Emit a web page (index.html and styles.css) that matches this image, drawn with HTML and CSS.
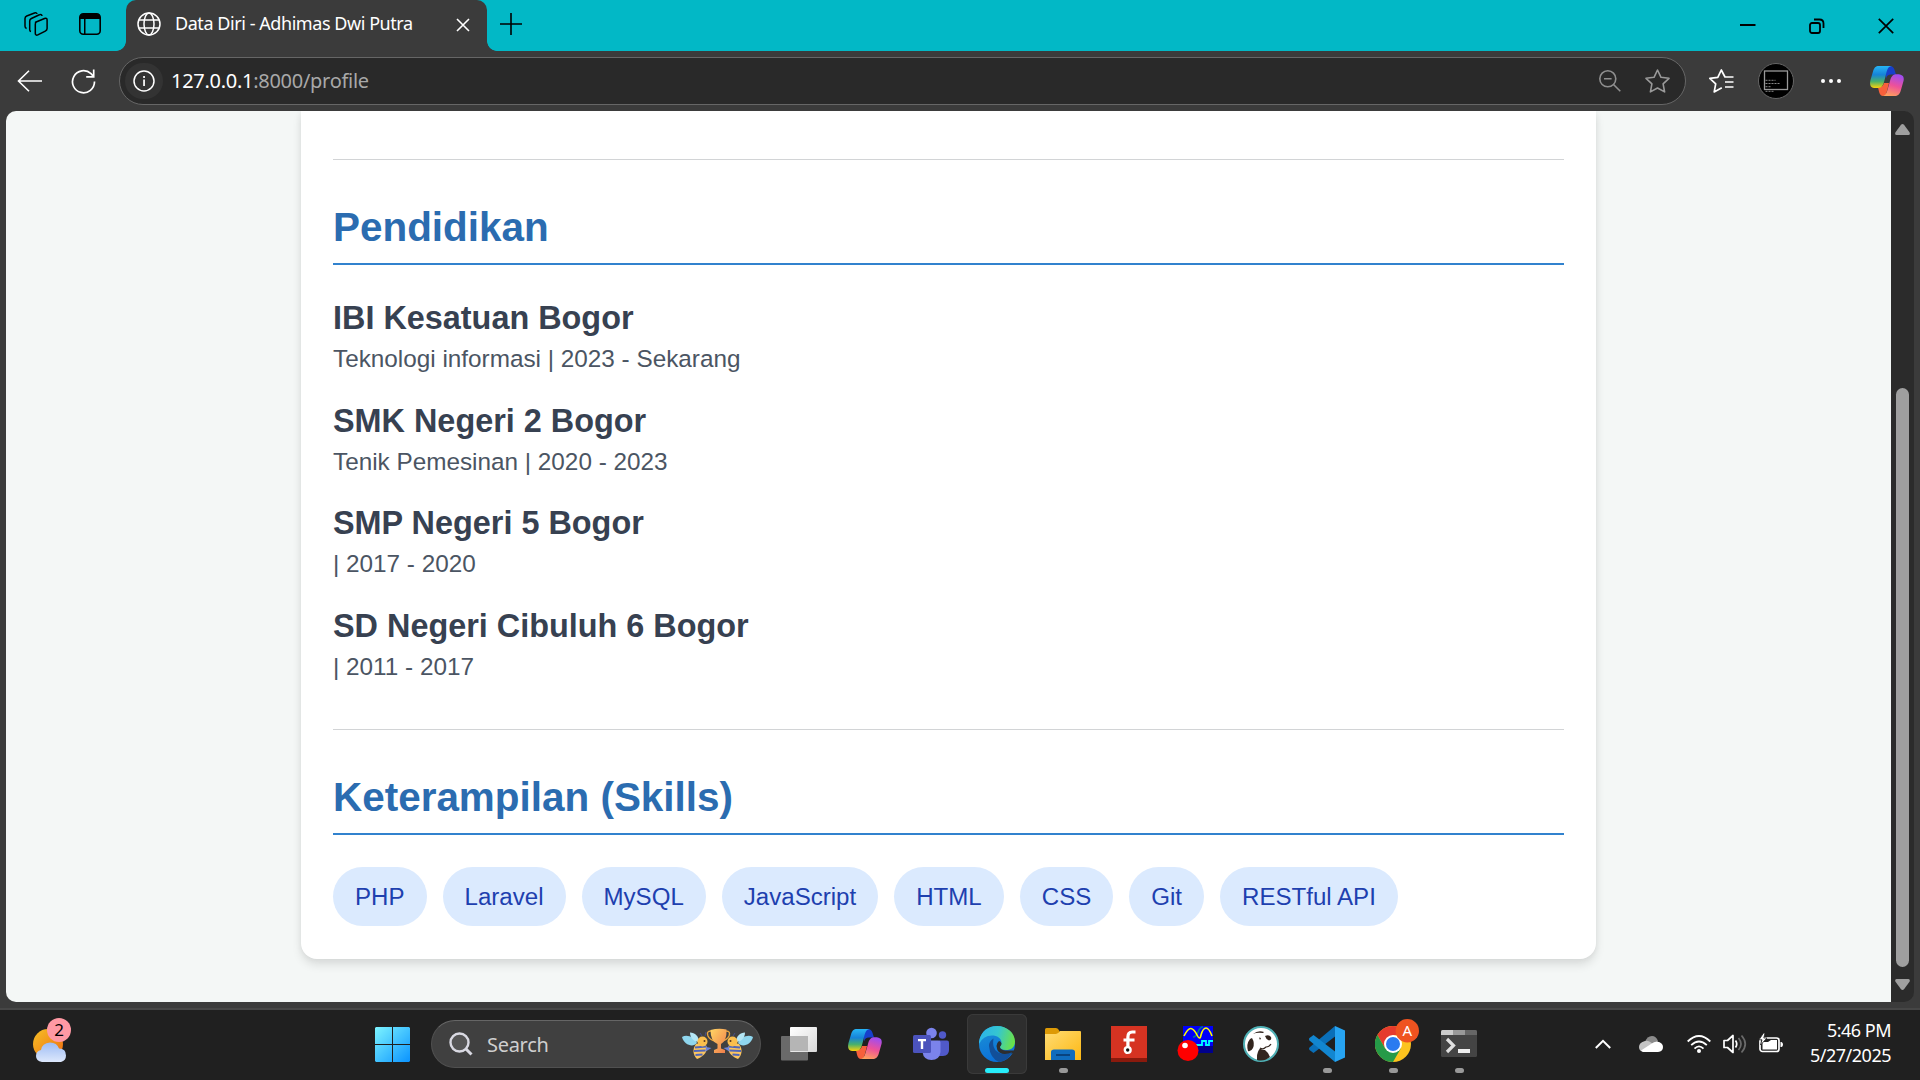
FILE: index.html
```html
<!DOCTYPE html>
<html lang="id">
<head>
<meta charset="utf-8">
<title>Data Diri - Adhimas Dwi Putra</title>
<link rel="stylesheet" href="styles.css">
</head>
<body>
<svg class="defs" width="0" height="0">
  <defs>
    <linearGradient id="cpA" x1="0" y1="0" x2="0" y2="1"><stop offset="0" stop-color="#27b5f5"/><stop offset=".4" stop-color="#1683d8"/><stop offset=".7" stop-color="#48b06c"/><stop offset="1" stop-color="#fbd20a"/></linearGradient>
    <linearGradient id="cpB" x1=".6" y1="0" x2=".3" y2="1"><stop offset="0" stop-color="#a04df0"/><stop offset=".5" stop-color="#ee5199"/><stop offset="1" stop-color="#ffa15c"/></linearGradient>
    <symbol id="copilot" viewBox="0 0 34 30">
      <path d="M16 0h4c4 0 4.500 4 6 8.500h-5c-3 0-4 1-5 4z" fill="#173fcb"/>
      <path d="M8 21c3 1 5-1 6-4h5l-2 8c-1 3.500-2 5-4 5-3.500 0-4-4.500-5-9z" fill="#f7603b"/>
      <path d="M9 0h13c-4 0-5 4-6.500 10.500L14 16c-1.500 5-3 6-7.500 6H4c-4 0-4.500-4-3.500-8l2.500-8.500C4.300 1.500 5.500 0 9 0z" fill="url(#cpA)"/>
      <path d="M27 8.300c5.500 0 7.500 2.200 6.500 6.700l-2.700 9.500c-1.300 4-2.800 5.500-6.300 5.500H12.500c3.500-.6 4.500-4 5.500-8l2-7c1.300-5 3-6.700 7-6.700z" fill="url(#cpB)"/>
    </symbol>
    <linearGradient id="win" x1="0" y1="0" x2="1" y2="1"><stop offset="0" stop-color="#7df4ff"/><stop offset="1" stop-color="#0a93ff"/></linearGradient>
    <linearGradient id="sun" x1="0" y1="0" x2="1" y2="1"><stop offset="0" stop-color="#f6c026"/><stop offset="1" stop-color="#ee6a10"/></linearGradient>
    <linearGradient id="cld" x1="0" y1="0" x2="0" y2="1"><stop offset="0" stop-color="#9dbcf4"/><stop offset="1" stop-color="#dde8fc"/></linearGradient>
    <linearGradient id="edA" x1="0" y1=".3" x2="1" y2=".5"><stop offset="0" stop-color="#2bb2ea"/><stop offset=".5" stop-color="#35c6d0"/><stop offset="1" stop-color="#6be247"/></linearGradient>
    <linearGradient id="edB" x1="0" y1="0" x2=".4" y2="1"><stop offset="0" stop-color="#1d93d4"/><stop offset="1" stop-color="#0a6fd8"/></linearGradient>
    <linearGradient id="fold" x1="0" y1="0" x2="1" y2="1"><stop offset="0" stop-color="#ffdc74"/><stop offset="1" stop-color="#fdb813"/></linearGradient>
    <linearGradient id="tv" x1="0" y1="0" x2="1" y2="1"><stop offset="0" stop-color="#fff"/><stop offset="1" stop-color="#d9d9d9"/></linearGradient>
    <linearGradient id="cup" x1="0" y1="0" x2="1" y2="1"><stop offset="0" stop-color="#ffd564"/><stop offset="1" stop-color="#ef7a4a"/></linearGradient>
    <symbol id="bee" viewBox="0 0 30 30">
      <path d="M0 8c5-3 12 0 15 6-4 5-13 2-15-6z" fill="#8fd6ee"/>
      <path d="M8 3.500c5 0 9 4 9 9.500-5 0-9-4-9-9.500z" fill="#b4e6f5"/>
      <path d="M14 15c5-2 11 0 11 4 0 5-5 9-10 11-4-4-5-10-1-15z" fill="#fbc55f"/>
      <path d="M13 18.500l11.500-1M12 22l11.500-.5M13.500 26l7-.5" stroke="#5166b8" stroke-width="1.800"/>
      <path d="M24 18l5.500 1-6 3.500z" fill="#6d84dc"/>
      <circle cx="20.500" cy="12.500" r="5" fill="#fbbf4d"/><circle cx="22.500" cy="12" r="1" fill="#5a3820"/>
      <path d="M20 7l-2-3M23 7l1-4" stroke="#47508a" stroke-width="1"/>
    </symbol>
  </defs>
</svg>

<header class="tabbar">
  <svg class="ic-work" width="24" height="24" viewBox="0 0 24 24" fill="none" stroke="#000" stroke-width="1.500" stroke-linejoin="round"><path d="M11.500 10.200l9-3.700c1.500-.6 2.600 0 2.600 1.500v8.500c0 1.300-.6 2-1.800 2.600l-7.500 3.800c-1.400.7-2.500 0-2.500-1.500v-9c0-1 .1-1.700 1-2.200zM7 19.500c-1-.2-1.300-.8-1.300-1.800V9c0-1.200.6-1.900 1.700-2.500l8-3.700c1.400-.7 2.500-.2 2.600 1.200M2.600 16.500C1.500 16 1 15.500 1 14.300V6.500C1 5.200 1.500 4.500 2.700 4L10.500 1c1.400-.5 2.300-.2 2.500 1"/></svg>
  <svg class="ic-vtab" width="22" height="22" viewBox="0 0 22 22"><rect x=".8" y=".8" width="20.400" height="20.400" rx="3.500" fill="none" stroke="#000" stroke-width="1.600"/><path d="M1 6V3.500Q1 1 4 1h14q3 0 3 2.500V6zM5 6h1.500v15H5z"/></svg>
  <div class="tab">
    <svg class="ic-globe" width="24" height="24" viewBox="0 0 24 24" fill="none" stroke="#fff" stroke-width="1.500"><circle cx="12" cy="12" r="11"/><ellipse cx="12" cy="12" rx="5" ry="11"/><path d="M2 8h20M2 16h20"/></svg>
    <span class="tab-title">Data Diri - Adhimas Dwi Putra</span>
    <svg class="ic-close" width="14" height="14" viewBox="0 0 14 14" stroke="#fff" stroke-width="1.600"><path d="M1 1l12 12M13 1L1 13"/></svg>
  </div>
  <svg class="ic-plus" width="22" height="22" viewBox="0 0 22 22" stroke="#000" stroke-width="1.600"><path d="M11 0v22M0 11h22"/></svg>
  <div class="winctl">
    <svg width="16" height="16" viewBox="0 0 16 16" stroke="#000" stroke-width="2"><path d="M0 7h15.500"/></svg>
    <svg width="16" height="16" viewBox="0 0 16 16" fill="none" stroke="#000" stroke-width="1.800"><rect x="1" y="5" width="10" height="10" rx="2"/><path d="M5 1.500h5.500q4 0 4 4V10"/></svg>
    <svg width="16" height="16" viewBox="0 0 16 16" stroke="#000" stroke-width="1.700"><path d="M.8.800l14.400 14.400M15.200.800L.8 15.200"/></svg>
  </div>
</header>

<nav class="toolbar">
  <svg class="ic-back" width="25" height="22" viewBox="0 0 25 22" fill="none" stroke="#fff" stroke-width="1.600"><path d="M25 11H1.500M12 .8L1.500 11 12 21.200"/></svg>
  <svg class="ic-reload" width="25" height="25" viewBox="0 0 25 25" fill="none" stroke="#fff" stroke-width="1.700"><path d="M23.500 12.500A11 11 0 1 1 20 4.700l2.500 2.800M22.700.500v7.300h-7.500"/></svg>
  <div class="address">
    <span class="info"><svg width="22" height="22" viewBox="0 0 22 22"><circle cx="11" cy="11" r="10" fill="none" stroke="#fff" stroke-width="1.500"/><path d="M10.200 9.500h1.700V16h-1.700zM10.200 6h1.700v1.900h-1.700z" fill="#fff"/></svg></span>
    <span class="url"><b>127.0.0.1</b>:8000/profile</span>
    <svg class="ic-zoom" width="22" height="22" viewBox="0 0 22 22" fill="none" stroke="#8f8f8f" stroke-width="1.600"><circle cx="8.800" cy="8.800" r="8"/><path d="M5 8.800h7.600M14.500 14.500l6.800 6.800"/></svg>
    <svg class="ic-star" width="25" height="24" viewBox="0 0 25 24" fill="none" stroke="#999" stroke-width="1.600" stroke-linejoin="round"><path d="M12.500 1l3.500 7.300 8 1-5.900 5.600 1.500 8-7.100-3.900-7.100 3.900 1.500-8L1 9.300l8-1z"/></svg>
  </div>
  <svg class="ic-favs" width="25" height="24" viewBox="0 0 25 24" fill="none" stroke="#fff" stroke-width="1.700" stroke-linejoin="round"><path d="M24.500 8H16l-3.700-7-3.500 7.300-8 1 5.900 5.600-1.500 8 7.600-4.200M16 13h8.500M16 18h8.500"/></svg>
  <svg class="ic-avatar" width="36" height="36" viewBox="0 0 36 36"><circle cx="18" cy="18" r="17.500" fill="#000" stroke="#666"/><rect x="6.500" y="8" width="23" height="18.500" fill="none" stroke="#999" stroke-width="1.300"/><path d="M7.500 17.300h10M7.500 20.500h14M7.500 23.700h6M7.500 28.300h8" stroke="#888" stroke-dasharray="2 1"/></svg>
  <svg class="ic-more" width="20" height="6" viewBox="0 0 20 6" fill="#fff"><circle cx="2" cy="3" r="2"/><circle cx="10" cy="3" r="2"/><circle cx="18" cy="3" r="2"/></svg>
  <svg class="ic-copilot" width="34" height="30"><use href="#copilot"/></svg>
</nav>

<div class="window">
  <main class="page">
    <article class="card">
      <hr>
      <h2>Pendidikan</h2>
      <section class="school"><h3>IBI Kesatuan Bogor</h3><p>Teknologi informasi | 2023 - Sekarang</p></section>
      <section class="school"><h3>SMK Negeri 2 Bogor</h3><p>Tenik Pemesinan | 2020 - 2023</p></section>
      <section class="school"><h3>SMP Negeri 5 Bogor</h3><p>| 2017 - 2020</p></section>
      <section class="school"><h3>SD Negeri Cibuluh 6 Bogor</h3><p>| 2011 - 2017</p></section>
      <hr class="second">
      <h2>Keterampilan (Skills)</h2>
      <ul class="skills"><li>PHP</li><li>Laravel</li><li>MySQL</li><li>JavaScript</li><li>HTML</li><li>CSS</li><li>Git</li><li>RESTful API</li></ul>
    </article>
  </main>
  <div class="scrollbar">
    <svg width="15" height="11" viewBox="0 0 15 11" fill="#9f9f9f"><path d="M6 .8q1.500-1.500 3 0l5.500 7.500q1 2.500-1 2.700h-12Q-.5 10.800.5 8.300z"/></svg>
    <div class="thumb"></div>
    <svg width="15" height="11" viewBox="0 0 15 11" fill="#9f9f9f"><path d="M6 10.200q1.500 1.500 3 0l5.500-7.500q1-2.500-1-2.700h-12Q-.5.200.5 2.700z"/></svg>
  </div>
</div>

<footer class="taskbar">
  <div class="weather">
    <svg width="40" height="44" viewBox="0 0 40 44"><circle cx="15" cy="26" r="15" fill="url(#sun)"/><path d="M9 44q-6-1-6-6 0-5 5-6 1-7 9-7.500 7 0 9 6 7 0 7 7 0 5-5 6.500z" fill="url(#cld)"/></svg>
    <span class="badge">2</span>
  </div>
  <svg class="start" width="35" height="35" viewBox="0 0 35 35"><path fill="url(#win)" d="M1 0h16v17H0V1zM18 0h16l1 1v16H18zM0 18h17v17H1l-1-1zM18 18h17v16l-1 1H18z"/></svg>
  <div class="search">
    <svg class="ic-search" width="24" height="24" viewBox="0 0 24 24" fill="#555" stroke="#d9d9e2" stroke-width="2.400"><circle cx="10.500" cy="10.500" r="9"/><path d="M17 17l5.500 5.500" stroke-width="3"/></svg>
    <span>Search</span>
    <svg class="bees" width="71" height="32" viewBox="0 0 71 32">
      <use href="#bee" width="30" height="30" y="1"/><g transform="translate(71 0) scale(-1 1)"><use href="#bee" width="30" height="30" y="1"/></g>
      <path d="M29 3q-5 0-3 5 2 4 7 5M44 3q5 0 3 5-2 4-7 5" fill="none" stroke="#e8a53d" stroke-width="1.400"/>
      <path d="M28.500 2q8-2 16-.5.500 11-5.500 14.500v4.500l4 1.500v3H32v-3l3.500-1.500V16q-7-2.500-7-14z" fill="url(#cup)"/>
    </svg>
  </div>
  <div class="apps">
    <div class="app"><svg width="36" height="36" viewBox="0 0 36 36"><rect y="10" width="27" height="24.500" rx="1" fill="#6a6a6a"/><rect x="9" y="1" width="27" height="25" rx="1" fill="url(#tv)"/><path d="M9 10h18v15H9z" fill="#b5b5b5"/></svg></div>
    <div class="app"><svg width="34" height="30"><use href="#copilot"/></svg></div>
    <div class="app"><svg width="36" height="36" viewBox="0 0 36 36"><circle cx="29.500" cy="9" r="3.700" fill="#5059c9"/><path d="M26 14.500h8q2 0 2 2V24q0 5.500-6 6h-4z" fill="#5059c9"/><circle cx="18.500" cy="7" r="5.300" fill="#7b83eb"/><path d="M11 14.500h14.500q2 0 2 2V26q-1 8-9 8t-9-8V16z" fill="#7b83eb"/><rect y="9" width="18" height="18" rx="1.500" fill="#4b53bc"/><path d="M5 13h8v2.200h-2.800V23H7.800v-7.800H5z" fill="#fff"/></svg></div>
    <div class="app active"><svg width="36" height="36" viewBox="0 0 36 36"><circle cx="18" cy="18" r="18" fill="url(#edB)"/><path d="M0 15.500C2 5 9 0 18 0c10 0 18 7 18 15.500 0 6-4 8.500-9 8.500-4 0-6-1.500-6-3 0-1 1.500-1.500 1.500-4 0-5-4.500-7.500-9.500-7.500Q4 9.500 0 18z" fill="url(#edA)"/><path d="M34 27q-3 1.500-7 1.500Q18 28.500 17.500 20q0-3 2.500-5 2 0 2.500 2.500c0 2-1.500 2.500-1.500 3.500 0 2 3 3.500 6.500 3.500H36z" fill="#2e2e2e"/><path d="M10 20q0-5 4.500-7.500-2.500 14.500 11 15.500 4 0 7.500-1.800-4 8.800-13 9.800-9-4-10-16z" fill="#124f99"/></svg><i></i></div>
    <div class="app"><svg width="36" height="36" viewBox="0 0 36 36"><path d="M0 3.500Q0 2 1.500 2H11q2 0 3.500 3v3H0z" fill="#dd9a06"/><path d="M0 8h11q2 0 4-3h20q1 0 1 1v28H0z" fill="url(#fold)"/><path d="M6 34v-8q0-2.500 3-2.500h18q3 0 3 2.500v8z" fill="#0f6cbd"/><path d="M11 29h14" stroke="#0a3f78" stroke-width="1.800"/></svg><i></i></div>
    <div class="app"><svg width="36" height="36" viewBox="0 0 36 36"><path fill="#d63322" d="M0 0h36v32H0z"/><path fill="#8a1a0d" d="M0 32h36v4H0z"/><path d="M24.500 6h-3.300q-4.300 0-4.300 5v10M12.500 14h11" fill="none" stroke="#fff" stroke-width="3.200"/><circle cx="16.700" cy="24" r="2.900" fill="#111" stroke="#fff" stroke-width="2.400"/></svg></div>
    <div class="app"><svg width="36" height="36" viewBox="0 0 36 36"><path fill="#0000fa" d="M6 0h30v27H6z"/><path fill="#00008c" d="M20 20h16v7H20z"/><path d="M16 11q3 0 5-5 2-5 5-5" fill="none" stroke="#008080" stroke-width="1.600"/><path d="M7 10q4-8 7-7.500T20 9t4 0q2-7 5-7t6 8" fill="none" stroke="#ff0" stroke-width="1.600"/><path d="M18 19h7v-4h4v4h3v-4h4" fill="none" stroke="#0ff" stroke-width="1.800"/><circle cx="11" cy="24.500" r="10.500" fill="#f00"/><circle cx="8" cy="19.500" r="2.800" fill="#fff"/></svg></div>
    <div class="app"><svg width="36" height="36" viewBox="0 0 36 36"><circle cx="18" cy="18" r="17" fill="#fff" stroke="#4fb0b5" stroke-width="2"/><path d="M14 31q0-5 3-8.500 2 1.500 5 1.500 4 3 5 7-6 5-13 3z" fill="#33261f"/><path d="M22 10q4-2 6 1 1 3-2 3.500-3-1-4-4.500zM7 13q-4 5-2 12 3 1 5-3 2-5-1-10zM16 11.500l2 .5-1 2zM10 8q5-4 11-2l-1 1Q14 6 10 8z" fill="#33261f"/><path d="M17 22q3 2 6-1 3 0 5-3" fill="none" stroke="#33261f" stroke-width="1.200"/></svg></div>
    <div class="app"><svg width="36" height="36" viewBox="0 0 36 36"><path d="M26 0l10 4.500v27L26 36z" fill="#27a4f2"/><path d="M26 0v10.500L4.500 27 .5 24q-1-1.200 0-2.400z" fill="#0a6fb8"/><path d="M26 36V25.500L4.500 9 .5 12q-1 1.200 0 2.400z" fill="#1286d0"/></svg><i></i></div>
    <div class="app"><svg class="chrome" width="46" height="44" viewBox="0 0 46 44"><circle cx="18" cy="26" r="18" fill="#fcc31e"/><path d="M2.400 17A18 18 0 0 1 33.600 17H18L10.200 30.500z" fill="#e53a2d"/><path d="M2.400 17A18 18 0 0 0 18 44l7.800-13.500H10.200z" fill="#259a48"/><circle cx="18" cy="26" r="9" fill="#fff"/><circle cx="18" cy="26" r="7" fill="#2a7bf0"/><circle cx="32.300" cy="12.800" r="11.700" fill="#ef5320"/><text x="32.300" y="18.300" text-anchor="middle" class="chrome-letter">A</text></svg><i></i></div>
    <div class="app"><svg width="36" height="36" viewBox="0 0 36 36"><rect y="4" width="36" height="27" rx="1.500" fill="#444"/><path d="M0 9V5.500Q0 4 1.500 4H12v5z" fill="#ccc"/><path d="M12 4h12v5H12z" fill="#999"/><path d="M24 4h10.500Q36 4 36 5.500V9H24z" fill="#666"/><path d="M6 13l6.500 6.500L6 26" fill="none" stroke="#e0e0e0" stroke-width="3.200"/><path d="M17 23h12v4H17z" fill="#eee"/></svg><i></i></div>
  </div>
  <div class="tray">
    <svg class="t-up" width="16" height="10" viewBox="0 0 16 10" fill="none" stroke="#fff" stroke-width="2"><path d="M.8 9L8 1.800 15.200 9"/></svg>
    <svg class="t-cloud" width="24" height="16" viewBox="0 0 24 16"><path d="M6 6q2-6 7-6 4 0 6 5l-6 6z" fill="#8b8b8b"/><path d="M5 16q-5-.5-5-5t6-6q3-1 6 1.500l8 6-5 3.500z" fill="#c4c4c4"/><path d="M4 16h15q5-.5 5-5t-6-5.500q-3 0-6 2.500L2 14.500z" fill="#fff"/></svg>
    <svg class="t-wifi" width="24" height="18" viewBox="0 0 24 18" fill="none" stroke="#fff" stroke-width="1.800"><path d="M.7 6.500q11.300-11 22.600 0M4.200 10.200q7.800-7.500 15.600 0M7.500 13.600q4.500-4.500 9 0"/><circle cx="12" cy="16" r="2" fill="#fff" stroke="none"/></svg>
    <svg class="t-vol" width="24" height="20" viewBox="0 0 24 20" fill="none" stroke="#fff" stroke-width="1.700" stroke-linejoin="round"><path d="M1 6.500h3.500L10 1.500v17l-5.500-5H1z"/><path d="M12.500 6.500q2.500 3.500 0 7"/><path d="M15.500 4q5 6 0 12M18.500 1.500q7.500 8.500 0 17" stroke="#6a6a6a"/></svg>
    <svg class="t-bat" width="24" height="20" viewBox="0 0 24 20"><rect x="1" y="5" width="19" height="13.500" rx="2.500" fill="none" stroke="#fff" stroke-width="1.700"/><path d="M3.500 9H9l3-2h6v9.500H3.500zM21.500 9h1q1.500.500 1.500 2.500T22.500 14h-1z" fill="#fff"/><path d="M4.500 0L0 6.800h3L1.500 12 8 5H4.800L6 0z" fill="#fff" stroke="#202020" stroke-width=".8"/></svg>
    <div class="clock"><span class="time">5:46 PM</span><span class="date">5/27/2025</span></div>
  </div>
</footer>
</body>
</html>
```
FILE: styles.css
```css
* { box-sizing: border-box; }
body {
  margin: 0;
  width: 1920px;
  height: 1080px;
  overflow: hidden;
  display: flex;
  flex-direction: column;
  background: #3b3b3b;
  font-family: "Noto Sans", "Open Sans", sans-serif;
}
svg { display: block; flex: none; }
.defs { position: absolute; }

/* tab strip */
.tabbar { height: 51px; flex: none; display: flex; align-items: center; background: #02b8c6; }
.ic-work { margin: -3px 0 0 24px; }
.ic-vtab { margin: -3px 0 0 31px; }
.tab {
  position: relative;
  width: 361px;
  height: 51px;
  margin-left: 25px;
  display: flex;
  align-items: center;
  background: #3b3b3b;
  border-radius: 10px 10px 0 0;
}
.tab::before, .tab::after {
  content: "";
  position: absolute;
  bottom: 0;
  width: 10px;
  height: 10px;
}
.tab::before { left: -10px; background: radial-gradient(circle at 0 0, #02b8c6 9.5px, #3b3b3b 10.2px); }
.tab::after { right: -10px; background: radial-gradient(circle at 100% 0, #02b8c6 9.5px, #3b3b3b 10.2px); }
.ic-globe { margin: -3px 0 0 11px; }
.tab-title { width: 280px; margin: -5px 0 0 14px; font-size: 18px; letter-spacing: -0.44px; color: #fff; white-space: nowrap; }
.ic-close { margin: -2px 0 0 1px; }
.ic-plus { margin: -4px 0 0 13px; }
.tab { padding-right: 1px; }
.winctl { margin: 0 26px 0 auto; display: flex; gap: 53px; }

/* toolbar */
.toolbar { height: 60px; flex: none; display: flex; align-items: center; }
.ic-back { margin-left: 17px; }
.ic-reload { margin-left: 29px; }
.address {
  width: 1567px;
  height: 48px;
  margin-left: 23px;
  display: flex;
  align-items: center;
  background: #292929;
  border: 1.5px solid #666;
  border-radius: 24px;
}
.info { width: 38px; height: 36px; margin-left: 5px; border-radius: 18px; background: #333; display: grid; place-items: center; }
.url { margin: -1px 0 0 8px; font-size: 20px; letter-spacing: -0.28px; color: #a8a8a8; }
.url b { font-weight: 400; color: #fff; }
.ic-zoom { margin-left: auto; }
.ic-star { margin: 0 15px 0 24px; }
.ic-favs { margin-left: 23px; }
.ic-avatar { margin-left: 24px; }
.ic-more { margin-left: 27px; }
.ic-copilot { margin-left: 29px; }

/* page */
.window { height: 891px; flex: none; margin: 0 6px; display: flex; border-radius: 10px; overflow: hidden; }
.page { width: 1885px; background: #f4f7f6; font-family: "Liberation Sans", Arial, sans-serif; }
.card {
  width: 1295px;
  height: 848px;
  margin-left: 295px;
  padding: 48px 32px 0;
  background: #fff;
  border-radius: 0 0 16px 16px;
  box-shadow: 0 6px 10px rgba(0, 0, 0, .1), 0 0 6px rgba(0, 0, 0, .06);
}
hr { height: 1px; margin: 0 0 37px; border: 0; background: #d2d4d6; }
hr.second { margin-top: 44.2px; }
h2 {
  height: 68px;
  margin: 0 0 33px;
  font-size: 40.45px;
  line-height: 60px;
  color: #2b6cb0;
  border-bottom: 2px solid #3182ce;
}
h3 { margin: 0 0 3px; font-size: 32.4px; line-height: 40px; color: #374151; }
.school { height: 79px; margin-bottom: 23.6px; }
.school p { margin: 0; font-size: 24.3px; line-height: 36px; color: #4b5563; }
.skills { display: flex; gap: 16px; margin: -1px 0 0; padding: 0; list-style: none; }
.skills li {
  height: 59px;
  padding: 0 22px;
  border-radius: 30px;
  background: #dbeafe;
  color: #1e40af;
  font-size: 24.09px;
  line-height: 60px;
  white-space: nowrap;
}
.scrollbar { width: 23px; padding: 13px 0 12px; display: flex; flex-direction: column; align-items: center; justify-content: space-between; background: #2b2b2b; }
.thumb { width: 13px; height: 579px; margin: auto 0 12px; border-radius: 7px; background: #9f9f9f; }

/* taskbar */
.taskbar { height: 72px; flex: none; margin-top: 6px; display: flex; background: #202020; border-top: 2px solid #464646; }
.weather { position: relative; width: 40px; margin: 8px 0 0 33px; }
.badge {
  position: absolute;
  left: 14px;
  top: 0;
  width: 24px;
  height: 24px;
  border-radius: 12px;
  background: #ff99a4;
  color: #000;
  font-size: 17px;
  line-height: 24px;
  text-align: center;
}
.start { margin: 17px 0 0 302px; }
.search {
  width: 330px;
  height: 48px;
  margin: 10px 0 0 21px;
  display: flex;
  align-items: center;
  background: #404040;
  border: 1.5px solid #505050;
  border-top-color: #666;
  border-radius: 24px;
  color: #cfcfcf;
  font-size: 20px;
}
.ic-search { margin-left: 17px; }
.search span { margin: 0 0 0 14px; letter-spacing: -0.3px; }
.bees { margin: 0 7px 0 auto; }
.apps { display: flex; margin: 4px 0 0 8px; gap: 6px; }
.app { position: relative; width: 60px; height: 60px; border-radius: 6px; display: grid; place-items: center; }
.active { background: #2e2e2e; box-shadow: inset 0 0 0 1px #3a3a3a; }
.app i { position: absolute; bottom: 1px; left: 26px; width: 9px; height: 5px; border-radius: 3px; background: #999; }
.app.active i { left: 18px; width: 24px; background: #27edfb; }
.chrome { margin: -8px 0 0 10px; }
.chrome-letter { font-size: 15px; fill: #fff; }
.tray { margin-left: auto; margin-right: 29px; display: flex; align-items: flex-start; }
.t-up { margin: 29px 28px 0 0; }
.t-cloud { margin: 26px 24px 0 0; }
.t-wifi { margin: 25px 12px 0 0; }
.t-vol { margin: 24px 12px 0 0; }
.t-bat { margin: 23px 0 0; }
.clock { width: 108px; margin-top: 8px; display: flex; flex-direction: column; align-items: flex-end; color: #fff; font-size: 18px; line-height: 25px; white-space: nowrap; letter-spacing: -0.5px; }
```
